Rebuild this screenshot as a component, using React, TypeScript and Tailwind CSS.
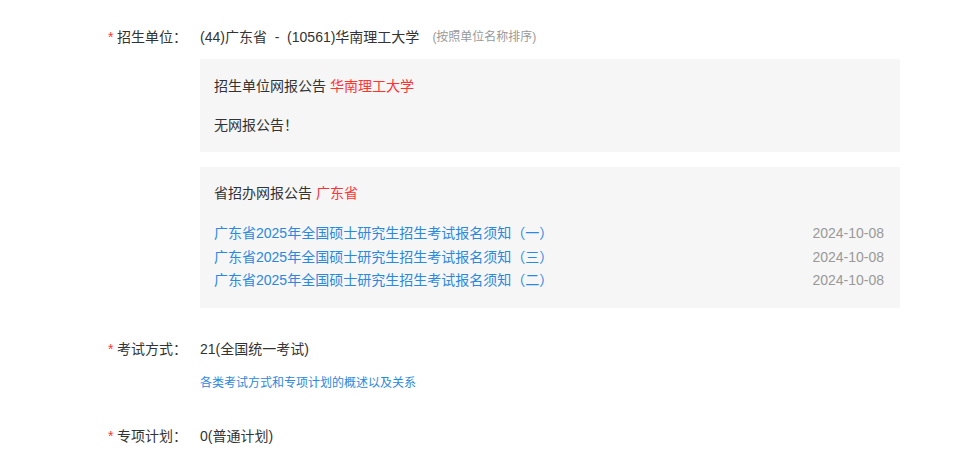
import React from "react";

const notices = [
  { title: "广东省2025年全国硕士研究生招生考试报名须知（一）", date: "2024-10-08" },
  { title: "广东省2025年全国硕士研究生招生考试报名须知（三）", date: "2024-10-08" },
  { title: "广东省2025年全国硕士研究生招生考试报名须知（二）", date: "2024-10-08" },
];

function Label({ text }: { text: string }) {
  return (
    <div className="w-[92px] shrink-0 self-start h-[20px] flex items-center">
      <span className="text-[#ff3333] w-[9px] text-[14px]">*</span>
      <span>{text}：</span>
    </div>
  );
}

export default function App() {
  return (
    <div
      className="min-h-screen bg-white text-[14px] leading-[20px] text-[#333] pt-[27px] pl-[108px]"
      style={{ fontFamily: '"Liberation Sans", "Noto Sans CJK SC", sans-serif' }}
    >
      <div className="flex">
        <Label text="招生单位" />
        <div className="w-[700px]">
          <div className="flex items-center h-[20px]">
            <span>(44)广东省&nbsp; - &nbsp;(10561)华南理工大学</span>
            <span className="ml-[13px] text-[12px] text-[#999]">(按照单位名称排序)</span>
          </div>

          <div className="mt-3 bg-[#f6f6f6] pl-[14px] pr-4 pt-[17px] pb-[17px]">
            <div>
              招生单位网报公告 <span className="text-[#ff3333]">华南理工大学</span>
            </div>
            <div className="mt-[19px]">无网报公告！</div>
          </div>

          <div className="mt-[15px] bg-[#f6f6f6] pl-[14px] pr-4 pt-[16px] pb-[15px]">
            <div>
              省招办网报公告 <span className="text-[#ff3333]">广东省</span>
            </div>
            <ul className="mt-[19px]">
              {notices.map((n, i) => (
                <li key={i} className="flex justify-between leading-[23.5px]">
                  <a className="text-[#2b88e0]">{n.title}</a>
                  <span className="text-[#999]">{n.date}</span>
                </li>
              ))}
            </ul>
          </div>
        </div>
      </div>

      <div className="flex mt-[31px]">
        <Label text="考试方式" />
        <div>
          <div>21(全国统一考试)</div>
          <a className="block mt-[15px] text-[12px] leading-[18px] text-[#2b88e0]">
            各类考试方式和专项计划的概述以及关系
          </a>
        </div>
      </div>

      <div className="flex mt-[34px]">
        <Label text="专项计划" />
        <div>0(普通计划)</div>
      </div>
    </div>
  );
}
